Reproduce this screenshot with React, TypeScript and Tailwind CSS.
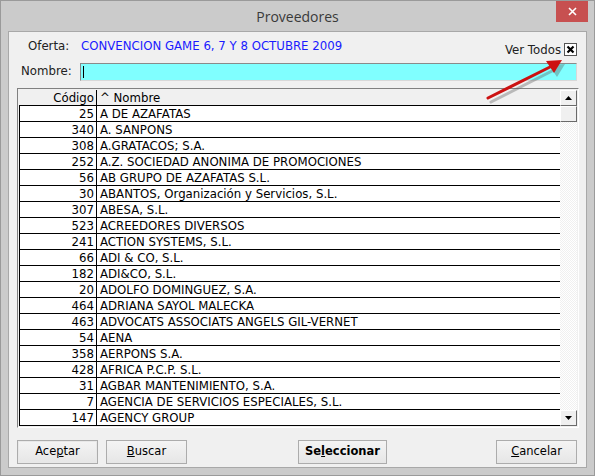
import React from "react";

const rows: [number, string][] = [
  [25, "A DE AZAFATAS"],
  [340, "A. SANPONS"],
  [308, "A.GRATACOS; S.A."],
  [252, "A.Z. SOCIEDAD ANONIMA DE PROMOCIONES"],
  [56, "AB GRUPO DE AZAFATAS S.L."],
  [30, "ABANTOS, Organización y Servicios, S.L."],
  [307, "ABESA, S.L."],
  [523, "ACREEDORES DIVERSOS"],
  [241, "ACTION SYSTEMS, S.L."],
  [66, "ADI & CO, S.L."],
  [182, "ADI&CO, S.L."],
  [20, "ADOLFO DOMINGUEZ, S.A."],
  [464, "ADRIANA SAYOL MALECKA"],
  [463, "ADVOCATS ASSOCIATS ANGELS GIL-VERNET"],
  [54, "AENA"],
  [358, "AERPONS S.A."],
  [428, "AFRICA P.C.P. S.L."],
  [31, "AGBAR MANTENIMIENTO, S.A."],
  [7, "AGENCIA DE SERVICIOS ESPECIALES, S.L."],
  [147, "AGENCY GROUP"],
];

function Btn({ children, className = "", wide }: { children: React.ReactNode; className?: string; wide: string }) {
  return (
    <button
      className={`h-[24px] ${wide} bg-gradient-to-b from-[#f4f4f4] to-[#e6e6e6] border border-[#acacac] text-[11.5px] text-black flex items-center justify-center ${className}`}
    >
      {children}
    </button>
  );
}

export default function App() {
  return (
    <div
      className="relative w-[595px] h-[476px] bg-[#cbcbcb] border border-[#9a9a9a] overflow-hidden"
      style={{ fontFamily: '"DejaVu Sans", Verdana, sans-serif' }}
    >
      {/* title bar */}
      <div className="h-[30px] flex items-center justify-center text-[14px] text-[#3a3a3a]" style={{ fontFamily: '"Open Sans", sans-serif' }}>
        Proveedores
      </div>
      <div className="absolute top-0 right-[6px] w-[32px] h-[21px] bg-[#c75050] flex items-center justify-center text-white">
        <svg width="9" height="9" viewBox="0 0 9 9">
          <path d="M1 1 L8 8 M8 1 L1 8" stroke="#fff" strokeWidth="1.6" />
        </svg>
      </div>

      {/* client area */}
      <div className="mx-[7px] h-[437px] bg-[#f0f0f0] border border-[#a8a8a8] text-[11.75px] text-black">
        {/* oferta / ver todos */}
        <div className="h-[28px] flex items-start pt-[7px]">
          <span className="ml-[19px] w-[53px] leading-[14px] text-[#222]">Oferta:</span>
          <span className="leading-[14px] text-[#1a1aff]">CONVENCION GAME 6, 7 Y 8 OCTUBRE 2009</span>
          <div className="ml-auto mr-[9px] mt-[2px] flex items-center gap-[3px]">
            <span className="text-[#222] leading-[14px] pt-[2px]">Ver Todos</span>
            <div className="w-[13px] h-[13px] bg-white border border-[#555] flex items-center justify-center">
              <svg width="9" height="9" viewBox="0 0 9 9">
                <path d="M1.5 1.5 L7.5 7.5 M7.5 1.5 L1.5 7.5" stroke="#000" strokeWidth="2.2" />
              </svg>
            </div>
          </div>
        </div>

        {/* nombre */}
        <div className="mt-[3px] flex items-center h-[18px]">
          <span className="ml-[12px] w-[59px] text-[#222]">Nombre:</span>
          <div className="w-[497px] h-[18px] bg-[#80ffff] border-t border-l border-[#8a8a8a] border-r border-b border-r-[#d8d8d8] border-b-[#d8d8d8] flex items-center pl-[2px]">
            <div className="w-px h-[12px] bg-black" />
          </div>
        </div>

        {/* grid */}
        <div className="mt-[7px] ml-[8px] w-[562px] h-[340px] border border-t-[#808080] border-l-[#808080] border-r-white border-b-white bg-[#f0f0f0] flex p-[1px]">
          <div className="flex-1 flex flex-col">
            <div className="h-[16px] flex border-b border-black shrink-0">
              <div className="w-[78px] text-right pr-[2px] pt-[1px] leading-[15px] border-r border-black">Código</div>
              <div className="pl-[3px] pt-[1px] leading-[15px]">^ Nombre</div>
            </div>
            <div className="flex-1 bg-white border-l border-black overflow-hidden">
              {rows.map(([code, name], i) => (
                <div key={i} className="h-[16px] flex border-b border-black">
                  <div className="w-[77px] text-right pr-[2px] pt-[1px] leading-[14px] border-r border-black">{code}</div>
                  <div className="pl-[3px] pt-[1px] leading-[14px] whitespace-nowrap">{name}</div>
                </div>
              ))}
            </div>
          </div>
          {/* scrollbar */}
          <div
            className="w-[17px] flex flex-col"
            style={{
              backgroundColor: "#f0f0f0",
              backgroundImage:
                "linear-gradient(45deg, #fff 25%, transparent 25%, transparent 75%, #fff 75%), linear-gradient(45deg, #fff 25%, transparent 25%, transparent 75%, #fff 75%)",
              backgroundSize: "2px 2px",
              backgroundPosition: "0 0, 1px 1px",
            }}
          >
            <div className="h-[16px] bg-[#f0f0f0] border border-t-white border-l-white border-r-[#6a6a6a] border-b-[#6a6a6a] flex items-center justify-center">
              <svg width="7" height="4" viewBox="0 0 7 4"><path d="M3.5 0 L7 4 L0 4 Z" fill="#000" /></svg>
            </div>
            <div className="h-[16px] bg-[#f0f0f0] border border-t-white border-l-white border-r-[#6a6a6a] border-b-[#6a6a6a]" />
            <div className="flex-1" />
            <div className="h-[16px] bg-[#f0f0f0] border border-t-white border-l-white border-r-[#6a6a6a] border-b-[#6a6a6a] flex items-center justify-center">
              <svg width="7" height="4" viewBox="0 0 7 4"><path d="M0 0 L7 0 L3.5 4 Z" fill="#000" /></svg>
            </div>
          </div>
        </div>

        {/* buttons */}
        <div className="mt-[12px] ml-[8px] mr-[9px] flex items-center">
          <Btn wide="w-[81px]" className="border-[#6b6b6b] shadow-[inset_0_0_0_1px_#e8e8e8]">
            Ace<span className="underline">p</span>tar
          </Btn>
          <Btn wide="w-[81px]" className="ml-[8px]">
            <span className="underline">B</span>uscar
          </Btn>
          <Btn wide="w-[89px]" className="ml-[111px] font-bold">
            Se<span className="underline">l</span>eccionar
          </Btn>
          <Btn wide="w-[81px]" className="ml-auto">
            <span className="underline">C</span>ancelar
          </Btn>
        </div>
      </div>

      {/* red pointer arrow */}
      <svg className="absolute left-0 top-0 pointer-events-none" width="595" height="476">
        <g opacity="0.35" transform="translate(3,4)">
          <path d="M487 97 L548 66" stroke="#555" strokeWidth="3" strokeLinecap="round" />
          <path d="M561 59 L545 60 L553 72 Z" fill="#555" />
        </g>
        <path d="M487 97 L549 66" stroke="#cc1111" strokeWidth="3" strokeLinecap="round" />
        <path d="M561 59 L545 60 L553 72 Z" fill="#cc1111" />
      </svg>
    </div>
  );
}
